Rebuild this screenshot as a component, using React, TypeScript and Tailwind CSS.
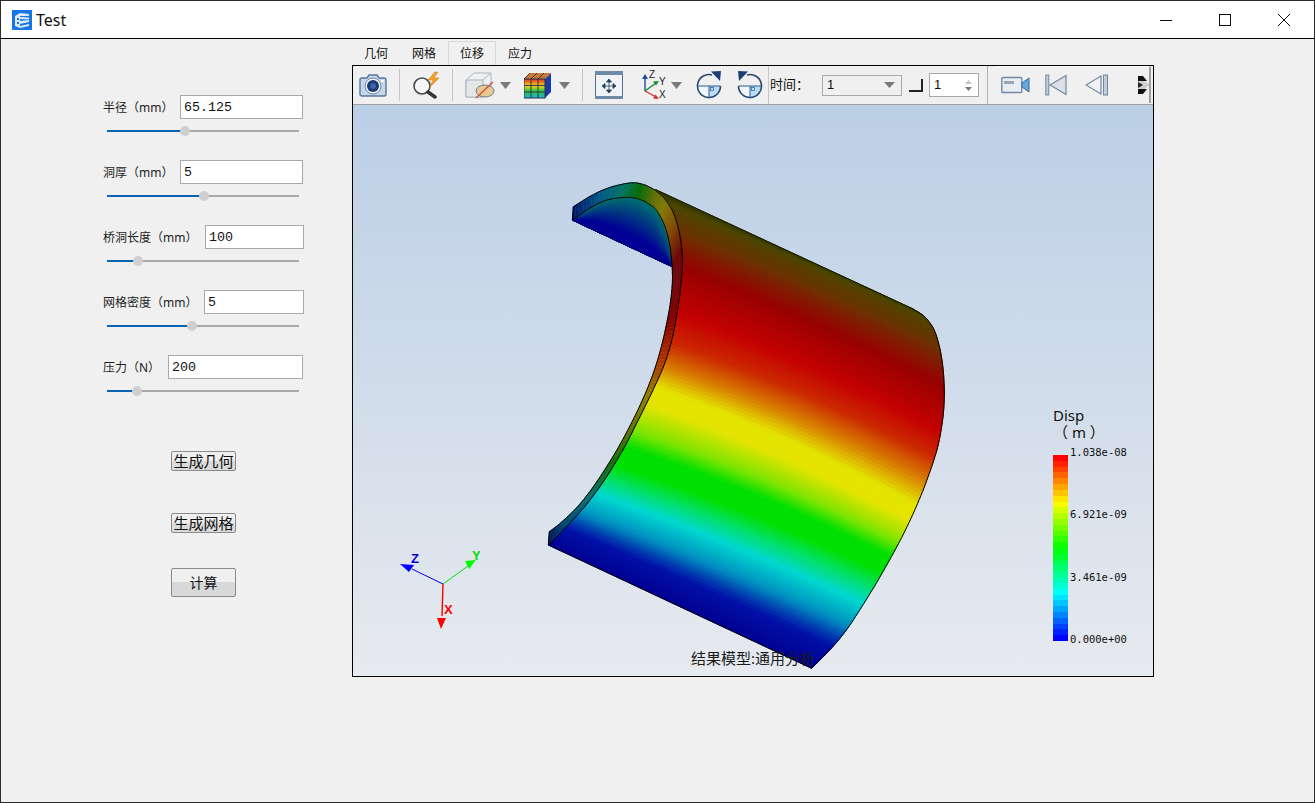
import React from 'react';

type Pt = [number, number];

// reference crop coords -> canvas coords
const P = (x: number, y: number): Pt => [540 + x / 3, 170 + y / 3];

const linear = (pts: Pt[], s: number): Pt => {
  const i = Math.min(Math.floor(s), pts.length - 2);
  const t = s - i;
  return [pts[i][0] + (pts[i + 1][0] - pts[i][0]) * t, pts[i][1] + (pts[i + 1][1] - pts[i][1]) * t];
};

// moving average along the polyline, window narrows towards both ends
const onCurve = (pts: Pt[], s: number): Pt => {
  const n = pts.length - 1;
  const w = Math.min(0.5, s, n - s);
  let x = 0;
  let y = 0;
  for (let k = -4; k <= 4; k++) {
    const p = linear(pts, s + (w * k) / 4);
    x += p[0];
    y += p[1];
  }
  return [x / 9, y / 9];
};

const hexToRgb = (h: string) => [1, 3, 5].map((i) => parseInt(h.slice(i, i + 2), 16));
const mix = (a: string, b: string, t: number) => {
  const x = hexToRgb(a);
  const y = hexToRgb(b);
  return `rgb(${x.map((v, i) => Math.round(v + (y[i] - v) * t)).join(',')})`;
};

const U = [0, 0.05, 0.1, 0.2, 0.35, 0.45, 0.55, 0.68, 0.82, 0.92, 1];
const FRONT = [P(345, 58), P(385, 98), P(414, 160), P(428, 290), P(413, 430), P(385, 560), P(335, 670), P(245, 850), P(165, 975), P(90, 1060), P(25, 1125)];
const BACK = [P(1115, 415), P(1162, 442), P(1197, 505), P(1217, 650), P(1205, 790), P(1175, 895), P(1120, 1035), P(1050, 1170), P(970, 1305), P(900, 1410), P(815, 1495)];

const SURFACE_STOPS: [number, string][] = [
  [0, '#2e3000'],
  [0.05, '#4a4600'],
  [0.12, '#6e3000'],
  [0.2, '#980000'],
  [0.35, '#c40000'],
  [0.42, '#cc2800'],
  [0.48, '#d88000'],
  [0.53, '#e4e400'],
  [0.57, '#e4e400'],
  [0.63, '#80e400'],
  [0.67, '#00e000'],
  [0.72, '#00e000'],
  [0.77, '#00e070'],
  [0.82, '#00d8d0'],
  [0.88, '#0090c0'],
  [0.94, '#0010a8'],
  [1, '#000090'],
];

const surfaceColor = (u: number) => {
  for (let i = 1; i < SURFACE_STOPS.length; i++) {
    if (u <= SURFACE_STOPS[i][0]) {
      const [a, ca] = SURFACE_STOPS[i - 1];
      const [b, cb] = SURFACE_STOPS[i];
      return mix(ca, cb, (u - a) / (b - a));
    }
  }
  return '#000090';
};

const uToS = (u: number) => {
  for (let i = 1; i < U.length; i++) {
    if (u <= U[i]) return i - 1 + (u - U[i - 1]) / (U[i] - U[i - 1]);
  }
  return U.length - 1;
};

// one line across the surface, bowed a little towards the top
const across = (u: number): Pt[] => {
  const f = onCurve(FRONT, uToS(u));
  const b = onCurve(BACK, uToS(u));
  const bow = Math.sin(Math.PI * u) * 7;
  return [0, 0.25, 0.5, 0.75, 1].map((s) => [
    f[0] + (b[0] - f[0]) * s,
    f[1] + (b[1] - f[1]) * s - bow * Math.sin(Math.PI * s),
  ]);
};

const poly = (pts: Pt[]) => pts.map((p) => `${p[0].toFixed(1)},${p[1].toFixed(1)}`).join(' ');

const STRIPS = Array.from({ length: 130 }, (_, i) => {
  const a = i / 130;
  const b = (i + 1) / 130;
  return { pts: poly([...across(a), ...across(b).reverse()]), color: surfaceColor((a + b) / 2) };
});

const RING: [Pt, Pt, string][] = [
  [P(100, 110), P(97, 150), '#001a70'],
  [P(180, 60), P(180, 93), '#005a85'],
  [P(260, 38), P(240, 82), '#00705f'],
  [P(300, 38), P(290, 82), '#006a00'],
  [P(345, 58), P(335, 105), '#5a6a00'],
  [P(380, 90), P(355, 125), '#807800'],
  [P(410, 145), P(385, 190), '#804800'],
  [P(428, 240), P(398, 290), '#6a0000'],
  [P(428, 300), P(397, 360), '#700000'],
  [P(413, 430), P(385, 440), '#800000'],
  [P(385, 560), P(358, 560), '#b03000'],
  [P(335, 670), P(318, 670), '#908000'],
  [P(285, 770), P(262, 785), '#607000'],
  [P(245, 850), P(208, 880), '#0a7000'],
  [P(165, 975), P(130, 995), '#0a6a70'],
  [P(90, 1060), P(62, 1060), '#004a70'],
  [P(25, 1125), P(28, 1085), '#001060'],
];
const RING_OUT = RING.map((r) => r[0]);
const RING_IN = RING.map((r) => r[1]);

const RING_STRIPS = Array.from({ length: 160 }, (_, i) => {
  const s0 = (i / 160) * (RING.length - 1);
  const s1 = ((i + 1) / 160) * (RING.length - 1);
  const k = Math.min(Math.floor(s0), RING.length - 2);
  return {
    pts: poly([onCurve(RING_OUT, s0), onCurve(RING_OUT, s1), onCurve(RING_IN, s1), onCurve(RING_IN, s0)]),
    color: mix(RING[k][2], RING[k + 1][2], s0 - k),
  };
});

// inside of the shell seen through the front opening
const INNER_ARC: Pt[] = RING_IN.slice(0, 8);
const LINE_A = P(97, 150);
const LINE_B = P(400, 292);
const INNER_BANDS = Array.from({ length: 22 }, (_, k) => {
  const f = k / 22;
  const pts: Pt[] = [];
  for (let i = 0; i <= 70; i++) {
    const s = (i / 70) * (INNER_ARC.length - 1);
    const a = onCurve(INNER_ARC, s);
    const l: Pt = [LINE_A[0] + (LINE_B[0] - LINE_A[0]) * (i / 70), LINE_A[1] + (LINE_B[1] - LINE_A[1]) * (i / 70)];
    pts.push([a[0] + (l[0] - a[0]) * f, a[1] + (l[1] - a[1]) * f]);
  }
  return { pts: poly(pts), color: f < 0.75 ? mix('#006f70', '#000094', f / 0.75) : '#000094' };
});

const sample = (pts: Pt[], steps = 12) => {
  const out: Pt[] = [];
  for (let i = 0; i <= (pts.length - 1) * steps; i++) out.push(onCurve(pts, i / steps));
  return poly(out);
};

const FIELDS = [
  { label: '半径（mm）', value: '65.125', labelW: 'w-[77px]', inputW: 'w-[123px]', pct: 78 },
  { label: '洞厚（mm）', value: '5', labelW: 'w-[77px]', inputW: 'w-[123px]', pct: 97 },
  { label: '桥洞长度（mm）', value: '100', labelW: 'w-[102px]', inputW: 'w-[99px]', pct: 31 },
  { label: '网格密度（mm）', value: '5', labelW: 'w-[101px]', inputW: 'w-[100px]', pct: 85 },
  { label: '压力（N）', value: '200', labelW: 'w-[65px]', inputW: 'w-[135px]', pct: 30 },
];

function Slider({ px }: { px: number }) {
  return (
    <div className="relative ml-[4px] mt-[11px] flex h-[2px] w-[192px] bg-[#a9a9a9]">
      <div className="h-full bg-[#0a64b4]" style={{ width: px }} />
      <div
        className="absolute top-[-4px] h-[10px] w-[10px] rounded-full bg-[#cfcfcf]"
        style={{ left: px - 5 }}
      />
    </div>
  );
}

function Field({ label, value, labelW, inputW, pct }: (typeof FIELDS)[number]) {
  return (
    <div className="h-[65px]">
      <div className="flex h-[24px] items-center">
        <span className={`${labelW} pt-[2px] text-[12px] text-[#222]`}>{label}</span>
        <input
          readOnly
          value={value}
          className={`${inputW} h-[24px] border border-[#a9a9a9] bg-white px-[3px] pt-[1px] font-['Liberation_Mono',monospace] text-[13.33px] text-[#111] outline-none`}
        />
      </div>
      <Slider px={pct} />
    </div>
  );
}

function Arrow({ ml }: { ml: string }) {
  return (
    <svg className={`${ml} shrink-0`} width="11" height="7" viewBox="0 0 11 7">
      <path d="M0 0H11L5.5 7Z" fill="#7a7a7a" />
    </svg>
  );
}

const Sep = ({ ml }: { ml: string }) => <div className={`${ml} h-[32px] w-px shrink-0 bg-[#c4c4c4]`} />;

function CameraIcon() {
  return (
    <svg className="ml-[6px] shrink-0" width="28" height="26" viewBox="0 0 28 26">
      <path d="M1 8q0-2 2-2h5l2-3h8l2 3h5q2 0 2 2v14q0 2-2 2H3q-2 0-2-2Z" fill="#c6d6e8" stroke="#55779c" strokeWidth="1.4" />
      <circle cx="14" cy="14" r="8" fill="#eef3f8" stroke="#6f8bab" />
      <circle cx="14" cy="14" r="6" fill="#1c3a72" />
      <circle cx="14" cy="14" r="3" fill="#3d63a3" />
      <rect x="22" y="8" width="3" height="2" fill="#fff" />
    </svg>
  );
}

function FlashLensIcon() {
  return (
    <svg className="ml-[12px] shrink-0" width="29" height="28" viewBox="0 0 29 28">
      <circle cx="10" cy="15" r="8" fill="#f4f6f8" stroke="#4a4a4a" strokeWidth="1.6" />
      <path d="M16 21l7 5" stroke="#333" strokeWidth="3.5" strokeLinecap="round" />
      <path d="M23 1l-7 8h5l-3 7 9-9h-5l4-6Z" fill="#f0a030" stroke="#d88010" strokeWidth="0.6" />
    </svg>
  );
}

function ClipCubeIcon() {
  return (
    <svg className="ml-[12px] shrink-0" width="30" height="28" viewBox="0 0 30 28">
      <path d="M1 9l8-7h17v16l-8 8H1Z" fill="#f0f0f0" stroke="#a8b4c0" />
      <path d="M1 9h17v17H1Z" fill="#e4e6e8" stroke="#a8b4c0" />
      <path d="M18 9l8-7" stroke="#a8b4c0" />
      <ellipse cx="20" cy="20" rx="9" ry="6" fill="#e6c890" stroke="#6c7e90" />
      <path d="M11 27L28 11" stroke="#d2503c" strokeWidth="1.3" />
    </svg>
  );
}

function ColorCubeIcon() {
  return (
    <svg className="ml-[13px] shrink-0" width="27" height="27" viewBox="0 0 27 27">
      <defs>
        <linearGradient id="rainbow" x1="0" y1="0" x2="0" y2="1">
          <stop offset="0" stopColor="#e03020" />
          <stop offset="0.35" stopColor="#f0d020" />
          <stop offset="0.65" stopColor="#30c040" />
          <stop offset="1" stopColor="#20b0d8" />
        </linearGradient>
      </defs>
      <path d="M6 1h21l-6 6H0Z" fill="#c87830" />
      <path d="M21 7l6-6v19l-6 6Z" fill="#1a3aa8" />
      <rect x="0" y="7" width="21" height="19" fill="url(#rainbow)" />
      <path d="M7 7v19M14 7v19M0 13.500h21M0 20h21M6 1L0 7M13 1l-6 6M20 1l-6 6" stroke="#22324a" strokeWidth="0.9" />
      <rect x="0" y="7" width="21" height="19" fill="none" stroke="#22324a" />
    </svg>
  );
}

function FitIcon() {
  return (
    <svg className="ml-[12px] shrink-0" width="28" height="28" viewBox="0 0 28 28">
      <rect x="0.500" y="0.500" width="27" height="27" fill="#f0f3f6" stroke="#55708f" />
      <rect x="0" y="0" width="28" height="4" fill="#6f8aa8" />
      <rect x="0" y="25" width="28" height="3" fill="#6f8aa8" />
      <path d="M14 8l-2.500 3h5ZM14 22l-2.500-3h5ZM7 15l3-2.500v5ZM21 15l-3-2.500v5ZM14 10v10M9 15h10" fill="#22405f" stroke="#22405f" strokeWidth="0.8" />
    </svg>
  );
}

function AxesIcon() {
  return (
    <svg className="ml-[17px] shrink-0" width="28" height="30" viewBox="0 0 28 30">
      <path d="M5 21V8" stroke="#1a4fa0" strokeWidth="1.4" />
      <path d="M5 4l-3 5h6Z" fill="#1a4fa0" />
      <path d="M5 21l11-8" stroke="#1c8c3c" strokeWidth="1.4" />
      <path d="M19 11l-6 .5 3 4Z" fill="#1c8c3c" />
      <path d="M5 21l11 6" stroke="#d03030" strokeWidth="1.4" />
      <path d="M19 29l-6-.5 2.500-4Z" fill="#d03030" />
      <text x="9" y="8" fontSize="10" fill="#222" fontFamily="'Liberation Sans', sans-serif">Z</text>
      <text x="19" y="15" fontSize="10" fill="#222" fontFamily="'Liberation Sans', sans-serif">Y</text>
      <text x="19" y="28" fontSize="10" fill="#222" fontFamily="'Liberation Sans', sans-serif">X</text>
    </svg>
  );
}

// the arc and arrow mirror between the two buttons, the shaded quadrant does not
function RotateIcon({ ml, ccw }: { ml: string; ccw?: boolean }) {
  return (
    <svg className={`${ml} shrink-0`} width="26" height="28" viewBox="0 0 26 28">
      <path d="M13 15V26.500A11.500 11.500 0 0 0 24.500 15Z" fill="#bcdcf4" />
      <path d="M1.500 15H13V26.500A11.500 11.500 0 0 1 1.500 15Z" fill="#f2f7fb" />
      <path d="M1.500 15H24.500M13 15V26.500" stroke="#2a5d96" strokeWidth="1" />
      <rect x="14.500" y="16.500" width="3" height="3" fill="none" stroke="#2a5d96" strokeWidth="0.7" />
      <g transform={ccw ? 'translate(26 0) scale(-1 1)' : undefined}>
        <path d="M24.500 15A11.500 11.500 0 1 1 16 3.900" fill="none" stroke="#2a4a72" strokeWidth="1.6" />
        <path d="M15 0.500L25 0L24 10Z" fill="#1c3f78" />
      </g>
    </svg>
  );
}

function VideoIcon() {
  return (
    <svg className="ml-[5px] shrink-0" width="29" height="18" viewBox="0 0 29 18">
      <rect x="0.800" y="1.500" width="20" height="15" rx="1" fill="#e8edf2" stroke="#6f88a4" strokeWidth="1.400" />
      <rect x="3" y="5" width="10" height="3" fill="#98a4b0" />
      <path d="M21 7l7-5v14l-7-5Z" fill="#68a8d8" stroke="#386a9a" />
    </svg>
  );
}

function FirstIcon() {
  return (
    <svg className="ml-[15px] shrink-0" width="22" height="22" viewBox="0 0 22 22">
      <rect x="0.800" y="1" width="3" height="20" fill="#c4ced8" stroke="#6f88a4" />
      <path d="M21 1.500V20.500L5 11Z" fill="#dde1e6" stroke="#6f88a4" strokeWidth="1.200" />
    </svg>
  );
}

function PrevIcon() {
  return (
    <svg className="ml-[18px] shrink-0" width="24" height="22" viewBox="0 0 24 22">
      <path d="M16 2V20L1 11Z" fill="#f0f2f4" stroke="#6f88a4" strokeWidth="1.200" />
      <rect x="18.500" y="1" width="4" height="20" fill="#c4ced8" stroke="#6f88a4" />
    </svg>
  );
}

function CutOffIcon() {
  return (
    <svg className="ml-[29px] shrink-0" width="12" height="18" viewBox="0 0 12 18">
      <path d="M0 0h5l4 5H0ZM0 13h9l-4 5H0Z" fill="#111" />
      <path d="M0 5h6l6 4-6 4H0Z" fill="#cfcfcf" />
      <path d="M0 6l5 3-5 3Z" fill="#222" />
    </svg>
  );
}

function Toolbar() {
  return (
    <div className="flex h-[39px] items-center border-b border-[#a0a0a0] bg-[#f0f0f0]">
      <CameraIcon />
      <Sep ml="ml-[12px]" />
      <FlashLensIcon />
      <Sep ml="ml-[11px]" />
      <ClipCubeIcon />
      <Arrow ml="ml-[5px]" />
      <ColorCubeIcon />
      <Arrow ml="ml-[8px]" />
      <Sep ml="ml-[12px]" />
      <FitIcon />
      <AxesIcon />
      <Arrow ml="ml-[3px]" />
      <RotateIcon ml="ml-[14px]" />
      <RotateIcon ml="ml-[15px]" ccw />
      <div className="ml-[5px] h-full w-px shrink-0 bg-[#c4c4c4]" />
      <span className="ml-px w-[37px] shrink-0 whitespace-nowrap text-[13px] text-[#111]">时间：</span>
      <div className="ml-[15px] flex h-[21px] w-[80px] shrink-0 items-center justify-between border border-[#a9a9a9] bg-[#f0f0f0] pl-[4px] pr-[6px] font-['Liberation_Sans',sans-serif] text-[13px] text-[#111]">
        1
        <svg width="11" height="6" viewBox="0 0 11 6">
          <path d="M0 0H11L5.500 6Z" fill="#7a7a7a" />
        </svg>
      </div>
      <div className="ml-[7px] h-[13px] w-[14px] shrink-0 border-b-2 border-r-2 border-[#222] bg-[#f0f0f0]" />
      <div className="ml-[6px] flex h-[24px] w-[50px] shrink-0 items-center justify-between border border-[#a9a9a9] bg-white pl-[4px] pr-[6px] font-['Liberation_Sans',sans-serif] text-[13px] text-[#111]">
        1
        <svg width="7" height="13" viewBox="0 0 7 13">
          <path d="M3.500 1L7 5H0Z" fill="#c4c4c4" />
          <path d="M3.500 12L7 8H0Z" fill="#7a7a7a" />
        </svg>
      </div>
      <div className="ml-[8px] h-full w-px shrink-0 bg-[#b0b0b0]" />
      <div className="ml-[8px] flex h-[37px] w-[155px] shrink-0 items-center self-start overflow-hidden border-r-2 border-t border-[#a0a0a0] border-t-white bg-[#f0f0f0]">
        <VideoIcon />
        <FirstIcon />
        <PrevIcon />
        <CutOffIcon />
      </div>
    </div>
  );
}

function Model() {
  return (
    <svg className="absolute inset-0" width="800" height="571" viewBox="353 105 800 571">
      {INNER_BANDS.map((b, i) => (
        <polygon key={i} points={b.pts} fill={b.color} stroke={b.color} strokeWidth="0.6" />
      ))}
      <line x1={LINE_A[0]} y1={LINE_A[1]} x2={LINE_B[0]} y2={LINE_B[1]} stroke="#001040" strokeWidth="0.6" />
      {STRIPS.map((s, i) => (
        <polygon key={i} points={s.pts} fill={s.color} stroke={s.color} strokeWidth="1" />
      ))}
      {RING_STRIPS.map((s, i) => (
        <polygon key={i} points={s.pts} fill={s.color} stroke={s.color} strokeWidth="0.5" />
      ))}
      <g fill="none" stroke="#000" strokeWidth="1">
        <polyline points={sample(RING_OUT)} />
        <polyline points={sample(RING_IN)} />
        <polyline points={sample(BACK)} />
        <polyline points={poly([RING_OUT[0], RING_IN[0]])} />
        <polyline points={poly([RING_OUT[RING.length - 1], RING_IN[RING.length - 1]])} />
        <polyline points={poly([FRONT[0], BACK[0]])} stroke="#1c1c00" />
        <polyline points={poly([FRONT[FRONT.length - 1], BACK[BACK.length - 1]])} />
      </g>
    </svg>
  );
}

function Triad() {
  return (
    <svg className="absolute left-[27px] top-[425px]" width="100" height="105" viewBox="380 530 100 105">
      <path d="M443 584L412 569" stroke="#0000ff" />
      <path d="M400 564L414 565L409 572Z" fill="#0000ff" />
      <path d="M443 584L468 566" stroke="#00e000" />
      <path d="M476 560L465 561L469 569Z" fill="#00ff00" />
      <path d="M443 584L442 616" stroke="#ff0000" strokeWidth="1.4" />
      <path d="M441 629L437 618L446 618Z" fill="#ff0000" />
      <g fontFamily="'Liberation Sans', sans-serif" fontWeight="700" fontSize="13">
        <text x="411" y="563" fill="#0000e0">Z</text>
        <text x="472" y="560" fill="#00e000">Y</text>
        <text x="444" y="614" fill="#ff0000">X</text>
      </g>
    </svg>
  );
}

const LEGEND_STOPS: [number, string][] = [
  [0, '#ff0000'],
  [0.25, '#ffff00'],
  [0.5, '#00ff00'],
  [0.75, '#00ffff'],
  [1, '#0000ff'],
];

function ColorBar() {
  const bands = Array.from({ length: 32 }, (_, i) => {
    const t = i / 31;
    const k = Math.min(Math.floor(t * 4), 3);
    return mix(LEGEND_STOPS[k][1], LEGEND_STOPS[k + 1][1], t * 4 - k);
  });
  return (
    <svg width="15" height="186" viewBox="0 0 15 186" shapeRendering="crispEdges">
      {bands.map((c, i) => (
        <rect key={i} x="0" y={(i * 186) / 32} width="15" height={186 / 32 + 1} fill={c} />
      ))}
    </svg>
  );
}

function Legend() {
  return (
    <div className="absolute left-[700px] top-[302px] text-[#111]">
      <div className="font-['Noto_Sans','Noto_Sans_CJK_SC',sans-serif] text-[15px] leading-[17px]">
        Disp
        <br />
        （ m ）
      </div>
      <div className="mt-[14px] flex h-[186px]">
        <ColorBar />
        <div className="ml-[2px] mt-[-10px] mb-[-5px] flex flex-col justify-between font-['DejaVu_Sans_Mono',monospace] text-[10.5px] leading-[14px]">
          <span>1.038e-08</span>
          <span>6.921e-09</span>
          <span>3.461e-09</span>
          <span>0.000e+00</span>
        </div>
      </div>
    </div>
  );
}

function WindowButtons() {
  return (
    <div className="flex items-center">
      <svg width="59" height="14" viewBox="0 0 59 14">
        <path d="M24 7.500H36" stroke="#111" />
      </svg>
      <svg width="59" height="14" viewBox="0 0 59 14">
        <rect x="24.500" y="1.500" width="11" height="11" fill="none" stroke="#111" />
      </svg>
      <svg width="59" height="14" viewBox="0 0 59 14">
        <path d="M24 1L36 13M36 1L24 13" stroke="#111" />
      </svg>
    </div>
  );
}

const TABS = ['几何', '网格', '位移', '应力'];

export default function App() {
  return (
    <div className="flex h-[803px] w-[1315px] flex-col overflow-hidden border border-[#2b2b2b] bg-[#f0f0f0] font-['Noto_Sans','Noto_Sans_CJK_SC',sans-serif]">
      {/* Title bar */}
      <div className="flex h-[38px] shrink-0 items-center justify-between border-b border-black bg-white pl-[11px] pr-[1px]">
        <div className="flex items-center">
          <svg width="20" height="20" viewBox="0 0 20 20">
            <rect width="20" height="20" fill="#1976e6" />
            <path d="M3 6l5-3 9 1v2L8 6v1l9 .5v2L8 9v2l9-1v2l-9 2v2l9-2v2l-9 2-5-2Z" fill="#dcebfb" />
            <path d="M5 8h2v2H5ZM5 12h2v2H5Z" fill="#1976e6" />
          </svg>
          <span className="ml-[4px] font-['Noto_Sans',sans-serif] text-[16px] text-[#111]">Test</span>
        </div>
        <WindowButtons />
      </div>

      <div className="flex flex-1">
        {/* Parameter column */}
        <div className="w-[351px] shrink-0 pl-[102px] pt-[56px]">
          {FIELDS.map((f) => (
            <Field key={f.label} {...f} />
          ))}
          <div className="ml-[68px] mt-[31px] flex flex-col items-start">
            <button className="h-[20px] w-[65px] rounded-[2px] border border-[#8a8a8a] bg-[linear-gradient(#efefef_45%,#dadada_55%)] text-[15px] leading-none text-[#111]">
              生成几何
            </button>
            <button className="mt-[42px] h-[20px] w-[65px] rounded-[2px] border border-[#8a8a8a] bg-[linear-gradient(#efefef_45%,#dadada_55%)] text-[15px] leading-none text-[#111]">
              生成网格
            </button>
            <button className="mt-[35px] h-[29px] w-[65px] rounded-[2px] border border-[#8a8a8a] bg-[linear-gradient(#efefef_50%,#d8d8d8_50%)] text-[14px] leading-none text-[#111]">
              计算
            </button>
          </div>
        </div>

        {/* Result viewer */}
        <div className="w-[802px] shrink-0">
          <div className="flex h-[26px] items-end">
            {TABS.map((t) => (
              <div
                key={t}
                className={`flex h-[24px] w-[48px] items-center justify-center pt-[1px] text-[12px] text-[#111] ${
                  t === '位移' ? 'border border-b-0 border-[#d9d9d9]' : ''
                }`}
              >
                {t}
              </div>
            ))}
          </div>
          <div className="h-[612px] border border-black">
            <Toolbar />
            <div className="relative h-[571px] bg-[linear-gradient(#bbcfe6,#e7eaef)]">
              <Model />
              <Triad />
              <Legend />
              <div className="absolute left-[338px] top-[544px] text-[15px] leading-[18px] text-[#1a1a1a]">结果模型:通用分析</div>
            </div>
          </div>
        </div>
      </div>
    </div>
  );
}
